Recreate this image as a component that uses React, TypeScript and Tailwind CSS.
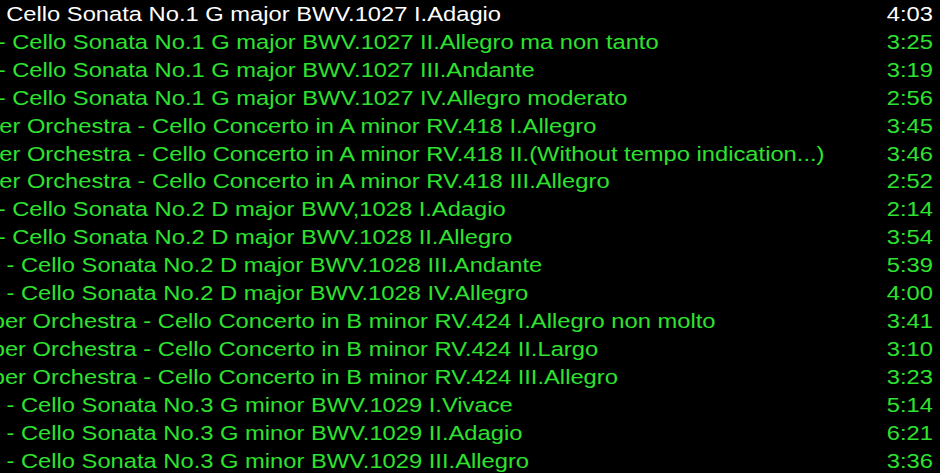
import React from 'react';

type Track = {
  title: string;
  time: string;
  shift: string; // how far the title is scrolled out on the left
  current?: boolean;
};

const tracks: Track[] = [
  { title: '- Cello Sonata No.1 G major BWV.1027 I.Adagio', time: '4:03', shift: '-ml-[7.2px]', current: true },
  { title: '- Cello Sonata No.1 G major BWV.1027 II.Allegro ma non tanto', time: '3:25', shift: '-ml-[2px]' },
  { title: '- Cello Sonata No.1 G major BWV.1027 III.Andante', time: '3:19', shift: '-ml-[2px]' },
  { title: '- Cello Sonata No.1 G major BWV.1027 IV.Allegro moderato', time: '2:56', shift: '-ml-[2px]' },
  { title: 'er Orchestra - Cello Concerto in A minor RV.418 I.Allegro', time: '3:45', shift: '-ml-[0.7px]' },
  { title: 'er Orchestra - Cello Concerto in A minor RV.418 II.(Without tempo indication...)', time: '3:46', shift: '-ml-[0.7px]' },
  { title: 'er Orchestra - Cello Concerto in A minor RV.418 III.Allegro', time: '2:52', shift: '-ml-[0.7px]' },
  { title: '- Cello Sonata No.2 D major BWV,1028 I.Adagio', time: '2:14', shift: '-ml-[2px]' },
  { title: '- Cello Sonata No.2 D major BWV.1028 II.Allegro', time: '3:54', shift: '-ml-[2px]' },
  { title: '- Cello Sonata No.2 D major BWV.1028 III.Andante', time: '5:39', shift: 'ml-[5.6px]' },
  { title: '- Cello Sonata No.2 D major BWV.1028 IV.Allegro', time: '4:00', shift: 'ml-[5.6px]' },
  { title: 'ber Orchestra - Cello Concerto in B minor RV.424 I.Allegro non molto', time: '3:41', shift: '-ml-[7.2px]' },
  { title: 'ber Orchestra - Cello Concerto in B minor RV.424 II.Largo', time: '3:10', shift: '-ml-[7.2px]' },
  { title: 'ber Orchestra - Cello Concerto in B minor RV.424 III.Allegro', time: '3:23', shift: '-ml-[7.2px]' },
  { title: '- Cello Sonata No.3 G minor BWV.1029 I.Vivace', time: '5:14', shift: 'ml-[5.6px]' },
  { title: '- Cello Sonata No.3 G minor BWV.1029 II.Adagio', time: '6:21', shift: 'ml-[5.6px]' },
  { title: '- Cello Sonata No.3 G minor BWV.1029 III.Allegro', time: '3:36', shift: 'ml-[5.6px]' },
];

export default function App() {
  return (
    <div className="w-[940px] h-[473px] bg-black overflow-hidden font-['Liberation_Sans',Arial,sans-serif]">
      {/* playlist font is drawn a little wide, so the list is stretched horizontally */}
      <ul className="w-[812.4px] origin-top-left scale-x-[1.157] text-[20.5px] leading-[27.9px]">
        {tracks.map((t, i) => (
          <li
            key={i}
            className={`flex items-baseline pr-[6px] ${t.current ? 'text-white' : 'text-[#2fe22f]'}`}
          >
            <div className="flex-1 min-w-0 overflow-hidden whitespace-nowrap">
              <span className={`inline-block ${t.shift}`}>{t.title}</span>
            </div>
            <span className="shrink-0 text-right">{t.time}</span>
          </li>
        ))}
      </ul>
    </div>
  );
}
